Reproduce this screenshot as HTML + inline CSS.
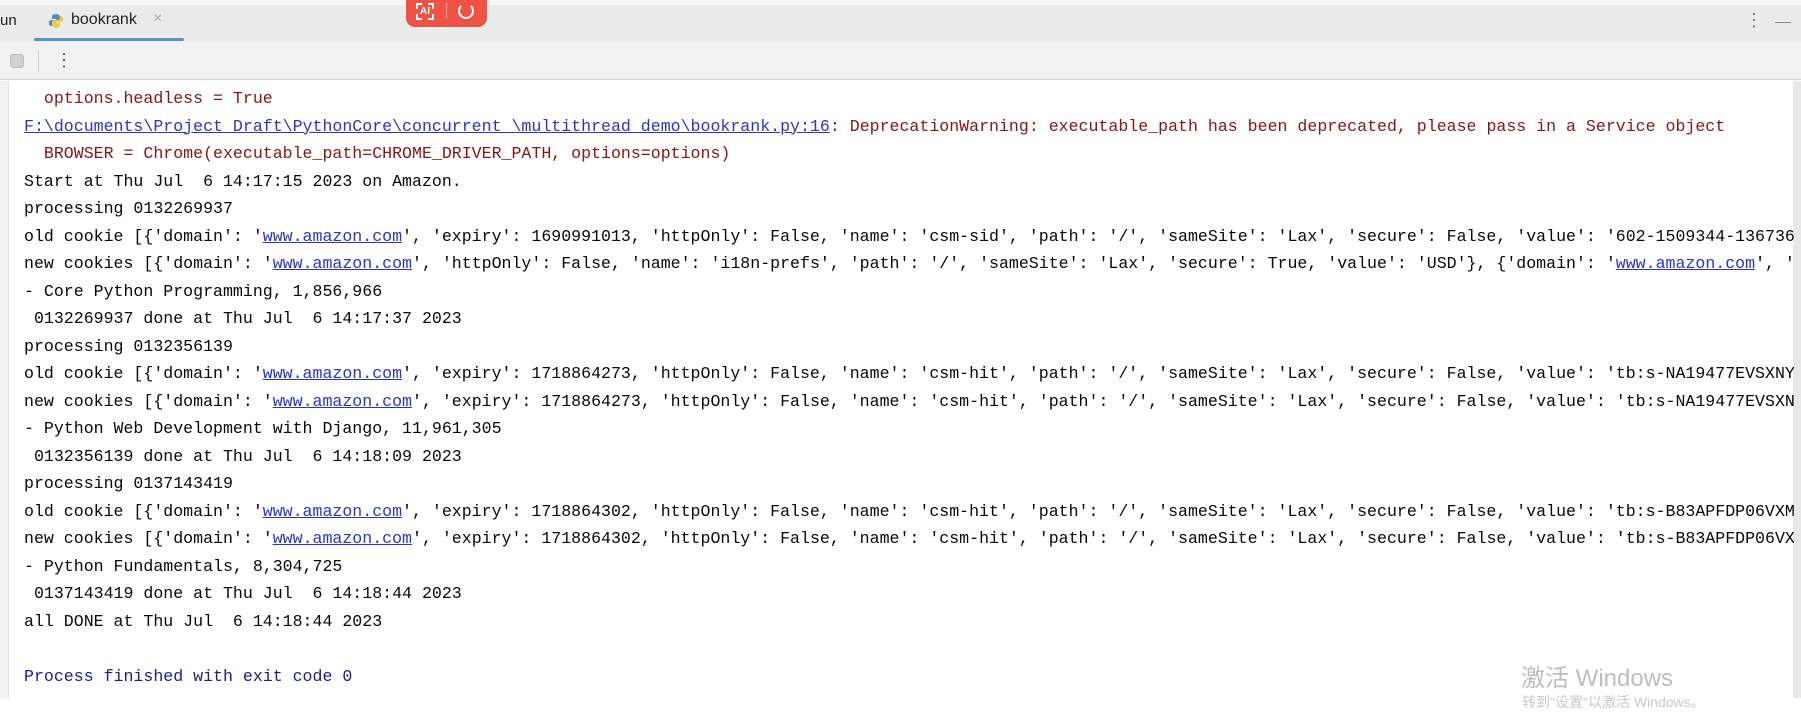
<!DOCTYPE html>
<html><head><meta charset="utf-8"><style>
*{margin:0;padding:0;box-sizing:border-box}
body{width:1801px;height:698px;overflow:hidden;background:#fff;position:relative;font-family:"Liberation Sans",sans-serif}
.tabbar{position:absolute;left:0;top:0;width:1801px;height:42px;background:#ebebeb;border-top:5px solid #f7f7f7}
.toolbar{position:absolute;left:0;top:42px;width:1801px;height:38px;background:#f2f2f2;border-bottom:1px solid #d4d4d4}
.gutter{position:absolute;left:0;top:81px;width:9px;height:617px;background:#f2f2f2;border-right:1px solid #e4e4e4}
.sb{position:absolute;right:0;top:81px;width:8px;height:617px;background:#e8e8e8}
.con{position:absolute;left:24px;top:85px;width:1770px;overflow:hidden;font-family:"Liberation Mono",monospace;font-size:16.58px;line-height:27.5px;white-space:pre;color:#080808}
.r{color:#871515}.b{color:#2b34c8;text-decoration:underline}.n{color:#1c1c8a}
</style></head><body>
<div class="tabbar"></div>
<div style="position:absolute;left:0;top:12px;font-size:15px;color:#222">un</div>
<svg style="position:absolute;left:48px;top:13px" width="16" height="16" viewBox="0 0 16 16"><path d="M8 1C4 1 4 3 4 4v2h4v1H3C1 7 1 9 1 10s0 3 2 3h1v-2c0-1 1-2 2-2h4c1 0 2-1 2-2V4c0-1-1-3-4-3z" fill="#5a8bc4"/><path d="M8 15c4 0 4-2 4-3v-2H8V9h5c2 0 2-2 2-3s0-3-2-3h-1v2c0 1-1 2-2 2H6c-1 0-2 1-2 2v3c0 1 1 3 4 3z" fill="#f0c94a"/></svg>
<div style="position:absolute;left:71px;top:11px;font-size:16px;color:#222">bookrank</div>
<div style="position:absolute;left:153px;top:10px;font-size:16px;color:#aaa">×</div>
<div style="position:absolute;left:34px;top:38px;width:150px;height:3px;background:#5a8fd0;border-radius:2px"></div>
<div style="position:absolute;left:406px;top:0;width:81px;height:27px;background:#f05245;border-radius:0 0 9px 9px"></div>
<div style="position:absolute;left:416px;top:3px;width:18px;height:17px;border:2px dashed #fff;color:#fff;font-size:10px;font-weight:bold;text-align:center;line-height:13px">AI</div>
<div style="position:absolute;left:446px;top:3px;width:1px;height:16px;background:#f8a39b"></div>
<div style="position:absolute;left:458px;top:3px;width:16px;height:16px;border:2px solid #fff;border-top-color:transparent;border-radius:50%"></div>
<div style="position:absolute;left:1745px;top:10px;font-size:18px;color:#777">⋮</div>
<div style="position:absolute;left:1775px;top:22px;width:16px;height:1px;background:#888"></div>
<div class="toolbar"></div>
<div style="position:absolute;left:10px;top:54px;width:14px;height:14px;background:#d0d0d0;border:1px solid #bbb;border-radius:3px"></div>
<div style="position:absolute;left:38px;top:50px;width:1px;height:22px;background:#ccc"></div>
<div style="position:absolute;left:55px;top:50px;font-size:18px;color:#555">⋮</div>
<div class="gutter"></div>
<div class="sb"></div>
<div class="con"><span class="r">  options.headless = True</span>
<span class="b">F:\documents\Project_Draft\PythonCore\concurrent_\multithread_demo\bookrank.py:16</span><span class="r">: DeprecationWarning: executable_path has been deprecated, please pass in a Service object</span>
<span class="r">  BROWSER = Chrome(executable_path=CHROME_DRIVER_PATH, options=options)</span>
Start at Thu Jul  6 14:17:15 2023 on Amazon.
processing 0132269937
old cookie [{'domain': '<span class="b">www.amazon.com</span>', 'expiry': 1690991013, 'httpOnly': False, 'name': 'csm-sid', 'path': '/', 'sameSite': 'Lax', 'secure': False, 'value': '602-1509344-1367363'}]
new cookies [{'domain': '<span class="b">www.amazon.com</span>', 'httpOnly': False, 'name': 'i18n-prefs', 'path': '/', 'sameSite': 'Lax', 'secure': True, 'value': 'USD'}, {'domain': '<span class="b">www.amazon.com</span>', 'expiry'
- Core Python Programming, 1,856,966
 0132269937 done at Thu Jul  6 14:17:37 2023
processing 0132356139
old cookie [{'domain': '<span class="b">www.amazon.com</span>', 'expiry': 1718864273, 'httpOnly': False, 'name': 'csm-hit', 'path': '/', 'sameSite': 'Lax', 'secure': False, 'value': 'tb:s-NA19477EVSXNY'}]
new cookies [{'domain': '<span class="b">www.amazon.com</span>', 'expiry': 1718864273, 'httpOnly': False, 'name': 'csm-hit', 'path': '/', 'sameSite': 'Lax', 'secure': False, 'value': 'tb:s-NA19477EVSXNY'}]
- Python Web Development with Django, 11,961,305
 0132356139 done at Thu Jul  6 14:18:09 2023
processing 0137143419
old cookie [{'domain': '<span class="b">www.amazon.com</span>', 'expiry': 1718864302, 'httpOnly': False, 'name': 'csm-hit', 'path': '/', 'sameSite': 'Lax', 'secure': False, 'value': 'tb:s-B83APFDP06VXM'}]
new cookies [{'domain': '<span class="b">www.amazon.com</span>', 'expiry': 1718864302, 'httpOnly': False, 'name': 'csm-hit', 'path': '/', 'sameSite': 'Lax', 'secure': False, 'value': 'tb:s-B83APFDP06VXM'}]
- Python Fundamentals, 8,304,725
 0137143419 done at Thu Jul  6 14:18:44 2023
all DONE at Thu Jul  6 14:18:44 2023

<span class="n">Process finished with exit code 0</span></div>
<div style="position:absolute;left:1521px;top:658px;font-family:'Liberation Sans','Noto Sans CJK SC',sans-serif;font-size:24px;color:#bdbdbd;white-space:nowrap">激活 Windows</div>
<div style="position:absolute;left:1522px;top:692px;font-family:'Liberation Sans','Noto Sans CJK SC',sans-serif;font-size:14px;color:#c8c8c8;white-space:nowrap">转到"设置"以激活 Windows。</div>
</body></html>
